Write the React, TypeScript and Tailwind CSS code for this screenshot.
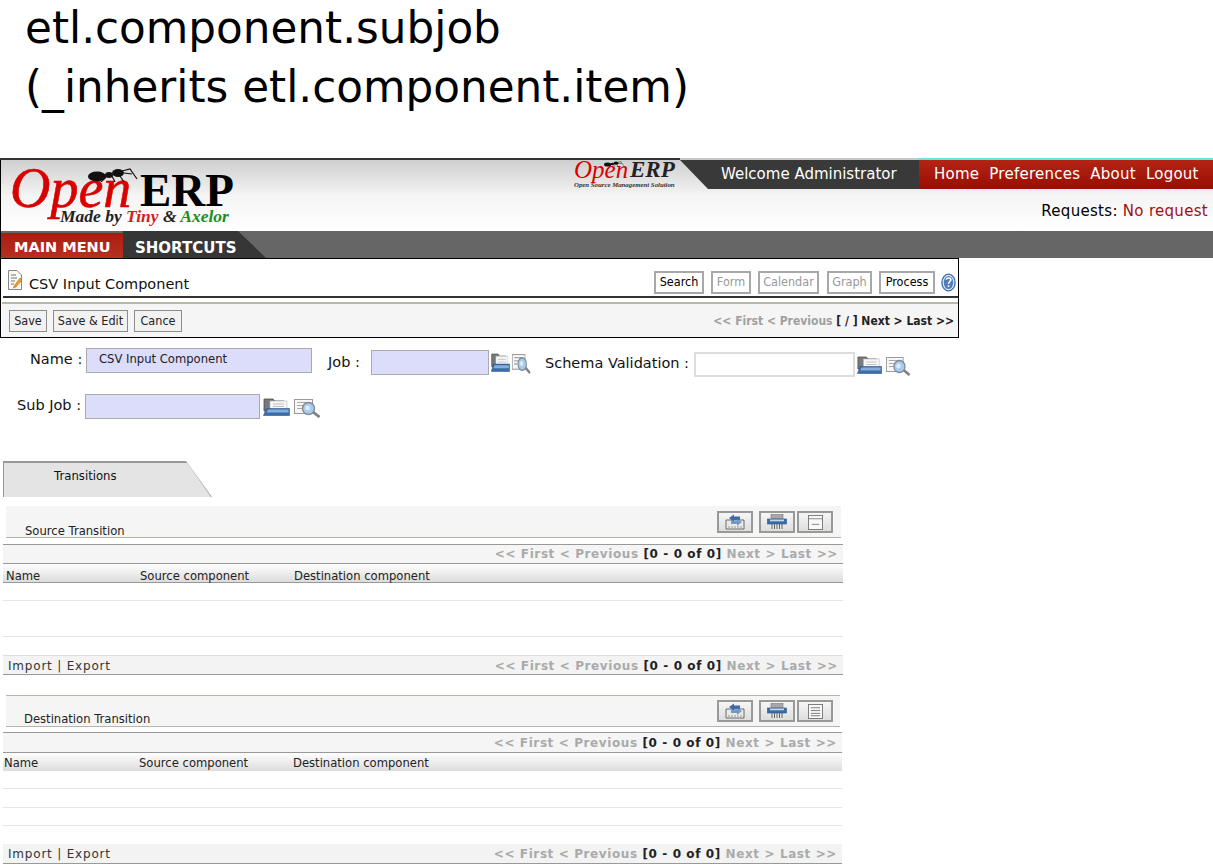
import React from "react";

const condensed = "font-['DejaVu_Sans_Condensed','DejaVu_Sans',sans-serif]";

function Ant({ className }: { className?: string }) {
  return (
    <svg viewBox="0 0 50 14" className={className}>
      <ellipse cx="9" cy="8.5" rx="9" ry="5" fill="#111" />
      <ellipse cx="21" cy="7" rx="4" ry="3" fill="#111" />
      <ellipse cx="30" cy="5" rx="6" ry="4" fill="#111" />
      <path d="M18 9 L13 14 M24 8 L27 14 M32 8 L36 14 M34 3 L42 1 L49 11 M36 5 L44 6" stroke="#111" strokeWidth="1.2" fill="none" />
    </svg>
  );
}

function FolderIcon({ className }: { className?: string }) {
  return (
    <svg viewBox="0 0 27 18" preserveAspectRatio="none" className={className}>
      <path d="M1 1 H10 L12 3 H21 V13 H1 Z" fill="#77797c" stroke="#4c4c4c" strokeWidth="0.8" />
      <rect x="7" y="3" width="17" height="9" fill="#f6f6f6" stroke="#bbb" strokeWidth="0.6" />
      <path d="M10 6 H21 M10 8.5 H21" stroke="#b5b5b5" strokeWidth="0.8" />
      <path d="M0.5 17.5 L3.5 10.5 H26.5 V17.5 Z" fill="#3a6cab" stroke="#2a5488" strokeWidth="0.6" />
      <path d="M5 11.5 H25.5 V14.5 H3.5 Z" fill="#86aedb" />
    </svg>
  );
}

function FindIcon({ className }: { className?: string }) {
  return (
    <svg viewBox="0 0 27 19" preserveAspectRatio="none" className={className}>
      <rect x="0.5" y="0.5" width="18" height="14" fill="#f7f7f7" stroke="#9a9a9a" />
      <path d="M3 3.5 H15 M3 6.5 H9 M3 9.5 H8" stroke="#aaa" strokeWidth="1.2" />
      <path d="M19 13 L25.5 18" stroke="#808080" strokeWidth="2.8" />
      <circle cx="14.5" cy="9.5" r="6" fill="#a9cbec" stroke="#7d8a98" strokeWidth="1.4" />
      <circle cx="13.5" cy="9" r="2.4" fill="#dcebf9" />
    </svg>
  );
}

function NoteIcon() {
  return (
    <svg viewBox="0 0 14 20" className="w-[14px] h-[20px]">
      <path d="M0.5 0.5 H9 L13.5 5 V19.5 H0.5 Z" fill="#f7f7f3" stroke="#888" />
      <path d="M3 5 H8 M3 8 H9 M3 11 H7 M3 14 H6" stroke="#777" strokeWidth="1" />
      <path d="M6 16 L12 8 L14 10 L8 17 L5.5 18 Z" fill="#e8a020" stroke="#a66a10" strokeWidth="0.5" />
    </svg>
  );
}

function HelpIcon() {
  return (
    <svg viewBox="0 0 16 20" className="w-[15px] h-[19px]">
      <ellipse cx="8" cy="10" rx="7" ry="9" fill="#dfe9f5" stroke="#3d6aa8" strokeWidth="1.4" />
      <ellipse cx="8" cy="10" rx="5" ry="7" fill="#4f7dbb" />
      <path d="M5.5 7 C6 4.5 10.5 4.5 10.5 7 C10.5 9 8 9 8 11.5" stroke="#fff" strokeWidth="1.6" fill="none" />
      <rect x="7.2" y="13" width="1.7" height="1.8" fill="#fff" />
    </svg>
  );
}

function ImportIcon() {
  return (
    <svg viewBox="0 0 20 16" className="w-[20px] h-[16px]">
      <path d="M1 6 H19 V15 H1 Z" fill="#e9e9e9" stroke="#4c4c4c" strokeWidth="0.8" />
      <path d="M3 13 H17" stroke="#999" strokeWidth="1" strokeDasharray="2 1" />
      <path d="M4 4 L9 0.5 V2.5 H15 V6 H9 V8 Z" fill="#3a6cab" />
      <path d="M17 8 L12 12 V10 H6 V7 H12 V5 Z" fill="#6c9bd0" />
    </svg>
  );
}

function PrintIcon() {
  return (
    <svg viewBox="0 0 20 16" className="w-[20px] h-[16px]">
      <rect x="4" y="0.5" width="12" height="4.5" fill="#a8a8a8" stroke="#777" strokeWidth="0.6" />
      <rect x="0.5" y="5" width="19" height="5" fill="#3a6cab" stroke="#2a5488" strokeWidth="0.6" />
      <rect x="3" y="5.5" width="14" height="1.8" fill="#c4d6ec" />
      <path d="M5 10 V15 M7.5 10 V15 M10 10 V15 M12.5 10 V15 M15 10 V15" stroke="#666" strokeWidth="1" />
    </svg>
  );
}

function ListIcon({ full }: { full?: boolean }) {
  return (
    <svg viewBox="0 0 16 16" className="w-[15px] h-[15px]">
      <rect x="0.5" y="0.5" width="15" height="15" fill="#f8f8f8" stroke="#777" />
      {full ? (
        <path d="M3 4 H13 M3 7 H13 M3 10 H13 M3 12.5 H13" stroke="#777" strokeWidth="1" />
      ) : (
        <path d="M1 4 H15 M4 10 H12" stroke="#888" strokeWidth="1" />
      )}
    </svg>
  );
}

function TopButton({ label, w, off }: { label: string; w: string; off?: boolean }) {
  return (
    <button
      className={`${w} h-[23px] flex items-center justify-center border-2 border-[#a8a8a8] bg-white text-[12.5px] ${condensed} ${off ? "text-[#999]" : "text-black"}`}
    >
      {label}
    </button>
  );
}

function SaveButton({ label, w }: { label: string; w: string }) {
  return (
    <button
      className={`${w} h-[22px] flex items-center justify-center border border-[#8c8c8c] bg-[#f2f2f2] text-[12.5px] text-[#222] ${condensed}`}
    >
      {label}
    </button>
  );
}

function ListPager() {
  return (
    <div className="text-right whitespace-nowrap text-[12px] font-bold tracking-[0.6px] text-[#aaa]">
      {"<< First < Previous "}
      <span className="text-[#222]">[0 - 0 of 0]</span>
      {" Next > Last >>"}
    </div>
  );
}

function ToolButton({ className, children }: { className?: string; children: React.ReactNode }) {
  return (
    <button
      className={`w-[36px] h-[22px] flex items-center justify-center border-2 border-[#999] bg-gradient-to-b from-[#f6f6f6] to-[#dedede] ${className ?? ""}`}
    >
      {children}
    </button>
  );
}

function ListSection({
  title,
  shiftText,
  fullList,
  rowLines,
  second,
}: {
  title: string;
  shiftText: string;
  fullList?: boolean;
  rowLines: string[];
  second?: boolean;
}) {
  return (
    <section className={`ml-[3px] ${second ? "w-[839px]" : "w-[840px]"}`}>
      <div
        className={`ml-[3px] mr-[2px] h-[32px] flex justify-between bg-[#f5f5f5] border-b border-[#b5b5a8] ${second ? "border-t" : ""}`}
      >
        <div className={`self-end ${shiftText} text-[11.6px] leading-[14px] text-[#222]`}>{title}</div>
        <div className={`flex ${second ? "mr-[7px] mt-[4px]" : "mr-[8px] mt-[5px]"}`}>
          <ToolButton>
            <ImportIcon />
          </ToolButton>
          <ToolButton className="ml-[6px]">
            <PrintIcon />
          </ToolButton>
          <ToolButton className="ml-[2px]">
            <ListIcon full={fullList} />
          </ToolButton>
        </div>
      </div>
      <div
        className={`flex items-center justify-end pr-[5px] bg-[#f5f5f5] border-t border-b border-[#999] ${second ? "mt-[5px] h-[21px]" : "mt-[6px] h-[20px]"}`}
      >
        <ListPager />
      </div>
      <div
        className={`flex items-end bg-gradient-to-b from-white to-[#dcdcdc] text-[11.6px] text-[#222] ${second ? "h-[18px] pl-[1px] leading-[15px]" : "h-[19px] pl-[3px] leading-[12px] border-b border-[#999]"}`}
      >
        <span className={second ? "w-[135px]" : "w-[134px]"}>Name</span>
        <span className="w-[154px]">Source component</span>
        <span>Destination component</span>
      </div>
      {rowLines.map((h, i) => (
        <div key={i} className={`${h} border-b border-[#e6e6e6]`} />
      ))}
      <div
        className={`mt-[18px] h-[20px] flex items-center justify-between pl-[5px] pr-[5px] bg-[#f3f3f3] border-b border-[#999] ${second ? "pt-[1px]" : "pt-[2px] border-t border-t-[#ddd]"}`}
      >
        <div className="text-[12px] tracking-[0.8px] text-[#333]">Import | Export</div>
        <ListPager />
      </div>
    </section>
  );
}

export default function App() {
  return (
    <div className="h-[865px] overflow-hidden bg-white font-['DejaVu_Sans',sans-serif] text-black">
      {/* Slide title */}
      <div className="h-[158px] pl-[25px] flex flex-col gap-[3px] text-[43.7px] leading-[56px] text-black">
        <div>etl.component.subjob</div>
        <div>(_inherits etl.component.item)</div>
      </div>

      {/* Top strip */}
      <div className="flex h-[2px]">
        <div className="w-[680px] bg-[#333]" />
        <div className="w-[239px] bg-[#c8c8c8]" />
        <div className="flex-1 bg-[#5fe8e8]" />
      </div>

      {/* Header */}
      <header className="flex h-[71px] border-l border-black bg-gradient-to-b from-[#cfcfcf] via-[#f4f4f4] via-50% to-white">
        <div className="relative w-[573px] shrink-0">
          <span className="absolute left-[9px] top-[9px] font-['Liberation_Serif',serif] italic text-[56px] leading-[38px] text-[#d90000] [-webkit-text-stroke:0.6px_#d90000]">
            Open
          </span>
          <Ant className="absolute left-[87px] top-[8px] w-[50px] h-[14px]" />
          <span className="absolute left-[139px] top-[15px] font-['Liberation_Serif',serif] font-bold text-[47px] leading-[30px] text-black">
            ERP
          </span>
          <span className="absolute left-[59px] top-[48px] whitespace-nowrap font-['Liberation_Serif',serif] font-bold italic text-[17.5px] leading-[16px] text-[#222]">
            Made by <span className="text-[#d81c1c]">Tiny</span> &amp; <span className="text-[#18901c]">Axelor</span>
          </span>
        </div>

        <div className="relative w-[106px] shrink-0">
          <span className="absolute left-0 top-[-1px] font-['Liberation_Serif',serif] italic text-[25px] leading-[22px] text-[#d90000]">
            Open
          </span>
          <Ant className="absolute left-[30px] top-[1px] w-[20px] h-[6px]" />
          <span className="absolute left-[56px] top-[-1px] font-['Liberation_Serif',serif] font-bold italic text-[23px] leading-[22px] text-[#222]">
            ERP
          </span>
          <span className="absolute left-0 top-[21px] whitespace-nowrap font-['Liberation_Serif',serif] font-bold italic text-[6.8px] leading-[8px] text-[#333]">
            Open Source Management Solution
          </span>
        </div>

        <div className="flex-1 flex flex-col">
          <div className="flex h-[29px]">
            <div className="w-[239px] pl-[41px] flex items-center bg-[#393939] [clip-path:polygon(0_0,100%_0,100%_100%,28px_100%)] text-[15px] text-white whitespace-nowrap">
              Welcome Administrator
            </div>
            <nav className="flex-1 flex items-center pl-[15px] gap-[10px] bg-gradient-to-b from-[#b42414] to-[#980c04] text-[15px] tracking-[0.25px] text-white whitespace-nowrap">
              <span>Home</span>
              <span>Preferences</span>
              <span>About</span>
              <span>Logout</span>
            </nav>
          </div>
          <div className="mt-[12px] pr-[5px] text-right text-[15px] leading-[20px] tracking-[0.3px] whitespace-nowrap">
            Requests: <span className="text-[#a01010]">No request</span>
          </div>
        </div>
      </header>

      {/* Menu bar */}
      <div className="flex h-[27px] bg-[#666]">
        <div className="w-[1px] bg-black" />
        <div className="mt-[2px] w-[122px] pl-[13px] pt-[5px] flex items-center bg-gradient-to-b from-[#a81c10] to-[#b83020] text-[14.5px] font-bold text-white whitespace-nowrap">
          MAIN MENU
        </div>
        <div className="w-[143px] pl-[12px] pt-[7px] flex items-center bg-[#363636] [clip-path:polygon(0_0,115px_0,100%_100%,0_100%)] text-[15px] font-bold text-white whitespace-nowrap">
          SHORTCUTS
        </div>
      </div>

      {/* Form box */}
      <div className="w-[959px] h-[80px] border border-black">
        <div className="flex justify-between ml-[2px] h-[39px] border-b-2 border-[#333]">
          <div className="flex items-center ml-[5px] mt-[5px] gap-[7px]">
            <NoteIcon />
            <span className="text-[14.5px] mt-[10px] text-[#111]">CSV Input Component</span>
          </div>
          <div className="flex items-center mt-[10px] mr-[2px]">
            <TopButton label="Search" w="w-[50px]" />
            <div className="w-[7px]" />
            <TopButton label="Form" w="w-[40px]" off />
            <div className="w-[7px]" />
            <TopButton label="Calendar" w="w-[61px]" off />
            <div className="w-[8px]" />
            <TopButton label="Graph" w="w-[45px]" off />
            <div className="w-[7px]" />
            <TopButton label="Process" w="w-[56px]" />
            <div className="w-[6px]" />
            <HelpIcon />
          </div>
        </div>
        <div className="mt-[4px] ml-[1px] h-[35px] flex items-center justify-between pl-[7px] pr-[4px] pt-[1px] bg-[#f5f5f5] border-t-2 border-[#b9b9aa]">
          <div className="flex gap-[6px]">
            <SaveButton label="Save" w="w-[38px]" />
            <SaveButton label="Save & Edit" w="w-[75px]" />
            <SaveButton label="Cance" w="w-[48px]" />
          </div>
          <div className={`text-[12px] font-bold text-[#a0a0a0] whitespace-nowrap ${condensed}`}>
            {"<< First < Previous "}
            <span className="text-[#222]">[ / ] Next &gt; Last &gt;&gt;</span>
          </div>
        </div>
      </div>

      {/* Fields */}
      <div className="flex items-start h-[56px] text-[14.5px] text-[#111] whitespace-nowrap">
        <label className="ml-[30px] mt-[12px] w-[56px] leading-[18px]">Name :</label>
        <div className="mt-[10px] w-[226px] h-[25px] pl-[12px] pb-[2px] flex items-center border border-[#aaa] bg-[#dcdcfb] text-[11.6px] text-[#222]">
          CSV Input Component
        </div>
        <label className="ml-[16px] mt-[15px] w-[43px] leading-[18px]">Job :</label>
        <div className="mt-[12px] w-[118px] h-[25px] border border-[#aaa] bg-[#dcdcfb]" />
        <FolderIcon className="ml-[2px] mt-[15px] w-[19px] h-[19px]" />
        <FindIcon className="ml-[2px] mt-[16px] w-[19px] h-[20px]" />
        <label className="ml-[14px] mt-[16px] w-[149px] leading-[18px]">Schema Validation :</label>
        <div className="mt-[14px] w-[161px] h-[25px] border-2 border-[#ddd] bg-white" />
        <FolderIcon className="ml-[2px] mt-[18px] w-[25px] h-[18px]" />
        <FindIcon className="ml-[4px] mt-[19px] w-[25px] h-[19px]" />
      </div>
      <div className="flex items-start h-[67px] text-[14.5px] text-[#111] whitespace-nowrap">
        <label className="ml-[17px] mt-[2px] w-[68px] leading-[18px]">Sub Job :</label>
        <div className="w-[175px] h-[25px] border border-[#aaa] bg-[#dcdcfb]" />
        <FolderIcon className="ml-[3px] mt-[4px] w-[27px] h-[18px]" />
        <FindIcon className="ml-[4px] mt-[5px] w-[27px] h-[19px]" />
      </div>

      {/* Tab */}
      <div className="ml-[3px] w-[209px] h-[36px] bg-[#999] [clip-path:polygon(0_0,183px_0,100%_100%,0_100%)]">
        <div className="h-[36px] ml-[1px] pt-[5px] pl-[50px] bg-[#e4e4e4] border-t-2 border-[#999] text-[11.7px] leading-[16px] text-[#111] [clip-path:polygon(0_0,182px_0,207px_100%,0_100%)]">
          Transitions
        </div>
      </div>

      <div className="mt-[9px]">
        <ListSection
          title="Source Transition"
          shiftText="ml-[19px] mb-[-1px]"
          rowLines={["h-[18px]", "h-[36px]"]}
        />
      </div>
      <div className="mt-[20px]">
        <ListSection
          title="Destination Transition"
          shiftText="ml-[18px]"
          fullList
          second
          rowLines={["h-[18px]", "h-[19px]", "h-[18px]"]}
        />
      </div>
    </div>
  );
}
